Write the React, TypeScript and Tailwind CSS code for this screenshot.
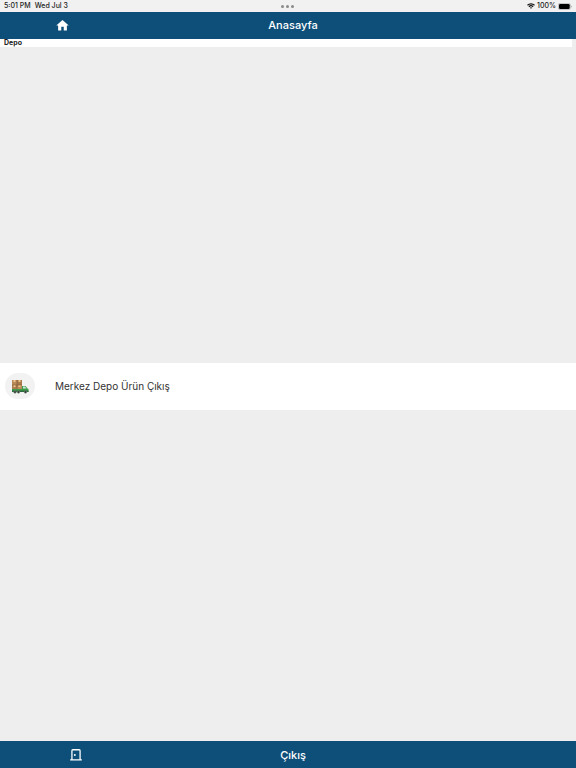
import { MdHome } from 'react-icons/md';

interface BarProps {
  title: string;
  variant?: 'top' | 'bottom';
}

function StatusBar() {
  return (
    <div className="grid h-3 grid-cols-3 items-center bg-[#f1f1f1] px-1 text-[7px] leading-3 text-[#222222]">
      <div className="flex gap-1 font-medium">
        <span>5:01 PM</span>
        <span>Wed Jul 3</span>
      </div>
      <div className="flex justify-center gap-0.5">
        <span className="size-[3px] rounded-full bg-[#8a8a8a]" />
        <span className="size-[3px] rounded-full bg-[#8a8a8a]" />
        <span className="size-[3px] rounded-full bg-[#8a8a8a]" />
      </div>
      <div className="flex items-center justify-end gap-0.5 font-medium">
        <svg viewBox="0 0 16 12" className="h-[6px] w-2" fill="none" stroke="#111111" strokeWidth="2.4" aria-hidden="true">
          <path d="M1 4.5a10 10 0 0 1 14 0M3.8 7.4a6 6 0 0 1 8.4 0" />
          <path d="M8 11.5 5.8 9.4a3.2 3.2 0 0 1 4.4 0z" fill="#111111" stroke="none" />
        </svg>
        <span>100%</span>
        <svg viewBox="0 0 28 14" className="h-[7px] w-3.5" aria-hidden="true">
          <rect x="0.7" y="0.7" width="24" height="12.6" rx="3.6" fill="none" stroke="#999999" strokeWidth="1.2" />
          <rect x="2" y="2" width="21.4" height="10" rx="2.4" fill="#000000" />
          <path d="M26 4.8c1.8.8 1.8 3.6 0 4.4z" fill="#999999" />
        </svg>
      </div>
    </div>
  );
}

function DoorIcon() {
  return (
    <svg viewBox="0 0 24 24" className="size-3.5" fill="none" stroke="currentColor" strokeWidth="2.2" aria-hidden="true">
      <path d="M2 20.5h20M5 20V4.5Q5 3 6.5 3h11Q19 3 19 4.5V20" />
      <circle cx="10" cy="12" r="1.6" fill="currentColor" stroke="none" />
    </svg>
  );
}

function TruckIcon() {
  return (
    <svg viewBox="0 0 36 30" className="h-[15px] w-[18px]" aria-hidden="true">
      <rect x="2" y="2" width="10" height="10" fill="#b98a58" />
      <rect x="12" y="2" width="10" height="10" fill="#a97a4b" />
      <rect x="2" y="12" width="10" height="10" fill="#ac7d4e" />
      <rect x="12" y="12" width="10" height="10" fill="#bb8c5a" />
      <path d="M5 2h4v4H5zM15 2h4v4h-4zM5 12h4v4H5zM15 12h4v4h-4z" fill="#efc68c" />
      <path d="M2 12h20M12 2v20" stroke="#75502e" />
      <path d="M2 20h20v-6h7l4 5 2 1v6H2z" fill="#3f9d4a" />
      <path d="M24 15h4l3 4h-7z" fill="#c9e5df" />
      <path d="M2 23h33v3H2z" fill="#28683a" />
      <g fill="#333b36" stroke="#829083">
        <circle cx="8" cy="26" r="2.6" />
        <circle cx="15" cy="26" r="2.6" />
        <circle cx="29" cy="26" r="2.6" />
      </g>
    </svg>
  );
}

function Bar({ title, variant = 'top' }: BarProps) {
  if (variant === 'bottom') {
    return (
      <footer className="h-[27px] bg-[#0e4f79] text-white">
        <button type="button" className="grid h-full w-full grid-cols-[152px_1fr_142px] items-center">
          <span className="flex justify-center">
            <DoorIcon />
          </span>
          <span className="text-center text-[11px] leading-4 font-medium">{title}</span>
        </button>
      </footer>
    );
  }

  return (
    <header className="grid h-[27px] grid-cols-[124px_1fr_114px] items-center bg-[#0e4f79] pb-px text-white">
      <button type="button" aria-label={title} className="flex justify-center">
        <MdHome className="size-[15px]" />
      </button>
      <h1 className="text-center text-[11px] leading-4 font-medium">{title}</h1>
    </header>
  );
}

export default function App() {
  return (
    <div className="flex min-h-screen flex-col bg-[#eeeeee] font-['Inter','Liberation_Sans',sans-serif]">
      <StatusBar />
      <Bar title="Anasayfa" />

      <main className="flex flex-1 flex-col">
        <h2 className="mr-1 bg-white px-1 text-[7px] leading-2 font-bold text-[#222222]">Depo</h2>

        {/* Menu */}
        <div className="flex flex-1 flex-col justify-center pb-4">
          <button type="button" className="flex h-[47px] w-full items-center bg-white px-[5px] text-left">
            <span className="flex h-[26px] w-[30px] items-center justify-center rounded-full bg-[#f2f2f2]">
              <TruckIcon />
            </span>
            <span className="ml-5 text-[10px] leading-4 text-[#333333]">Merkez Depo Ürün Çıkış</span>
          </button>
        </div>
      </main>

      <Bar title="Çıkış" variant="bottom" />
    </div>
  );
}
